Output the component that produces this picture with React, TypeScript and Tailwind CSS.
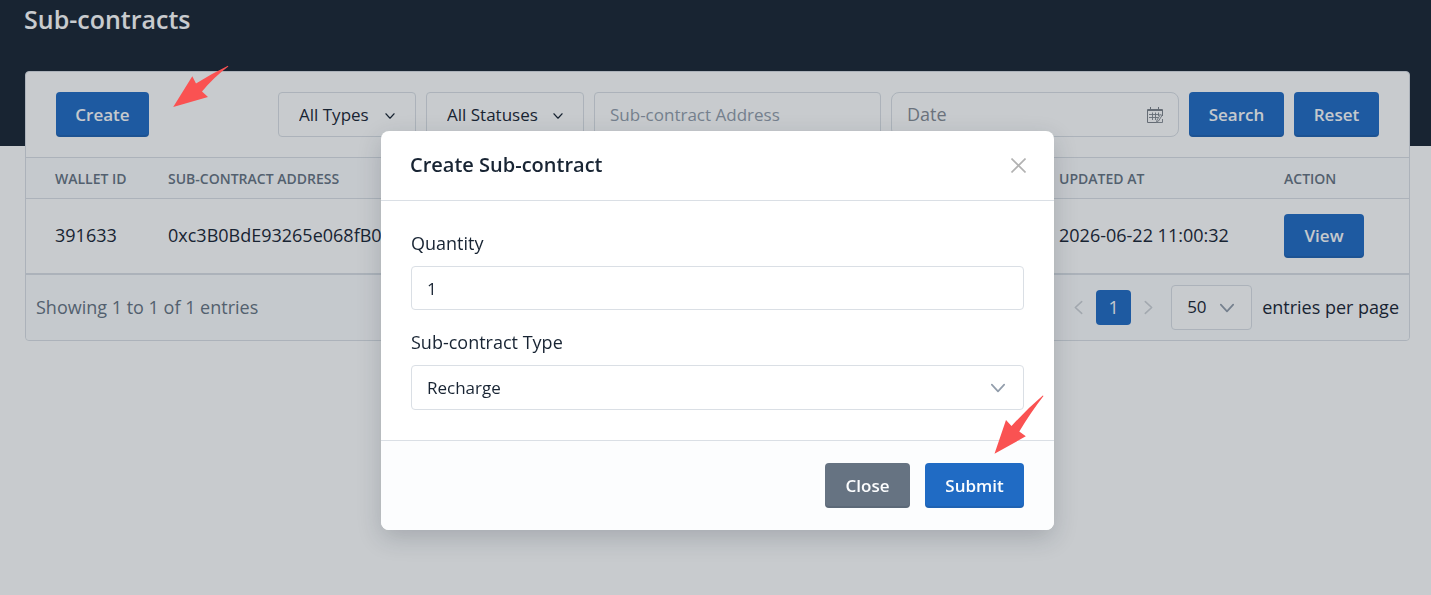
import React from "react";

const btn =
  "shrink-0 rounded bg-[#206bc4] text-[17px] font-semibold text-[#fcfdfe] shadow-[inset_0_-2px_0_rgba(24,36,51,0.12)]";

function Chevron({ className, size }: { className: string; size: number }) {
  return (
    <svg className={className} width={size} height={size} viewBox="0 0 16 16" fill="none" stroke="currentColor" aria-hidden="true">
      <path d="M2.5 5 L8 11 L13.5 5" strokeWidth="1.5" strokeLinecap="round" strokeLinejoin="round" />
    </svg>
  );
}

function FilterSelect({ label, value, width }: { label: string; value: string; width: string }) {
  return (
    <div className={"relative shrink-0 " + width}>
      <select
        aria-label={label}
        className="h-[45px] w-full appearance-none rounded border border-[#dadfe5] bg-white pr-8 pl-5 text-[17px] font-medium text-[#182433]"
      >
        <option>{value}</option>
      </select>
      <Chevron size={12} className="pointer-events-none absolute top-[18px] right-5 text-[#182433]" />
    </div>
  );
}

function CalendarIcon() {
  return (
    <svg width="16" height="16" viewBox="0 0 16 16" fill="none" stroke="#7d838b" aria-hidden="true">
      <path d="M9.5 15.5H0.5V2.5H15.5V9" />
      <path d="M0.5 3.5H15.5M3.5 0V4M11.5 0V4" />
      <path d="M2 7.5H12.5M2 10.5H11M5.5 5.5V13M8.5 5.5V13M11.5 5.5V9" strokeWidth="0.9" />
      <path d="M9.5 15.5L10 13L13.5 7.5L15 8.5L11.5 14L9.5 15.5H15.5V12" strokeWidth="0.9" />
    </svg>
  );
}

export default function App() {
  return (
    <div className="min-h-screen bg-white font-['Open_Sans','Noto_Sans',sans-serif] text-[#182433]">
      <header className="h-[146px] bg-[#182433] px-6">
        <h1 className="pt-1 text-[25px] leading-[30px] font-semibold text-white">Sub-contracts</h1>
      </header>

      <main className="-mt-[75px] pr-[21px] pl-[25px]">
        <section className="rounded border border-[#dadfe5] bg-white">
          <div className="flex gap-2.5 px-[30px] py-5">
            <button type="button" className={btn + " h-[45px] w-[93px]"}>Create</button>
            <div className="ml-auto flex gap-2.5">
              <FilterSelect label="Type" value="All Types" width="w-[138px]" />
              <FilterSelect label="Status" value="All Statuses" width="w-[158px]" />
              <input
                aria-label="Sub-contract Address"
                placeholder="Sub-contract Address"
                className="h-[45px] w-[287px] rounded border border-[#dadfe5] bg-white px-[15px] text-[17px] placeholder:text-[#929dab]"
              />
              <div className="flex h-[45px] w-[288px] items-center rounded-lg border border-[#dadfe5] bg-white px-[15px]">
                <input aria-label="Date" placeholder="Date" className="min-w-0 flex-1 bg-transparent text-[18px] placeholder:text-[#858b94]" />
                <CalendarIcon />
              </div>
              <button type="button" className={btn + " h-[45px] w-[95px]"}>Search</button>
              <button type="button" className={btn + " h-[45px] w-[85px]"}>Reset</button>
            </div>
          </div>

          <table className="w-full table-fixed border-t border-[#dadfe5] text-left">
            <colgroup>
              <col className="w-[131px]" />
              <col />
              <col className="w-[225px]" />
              <col className="w-[136px]" />
            </colgroup>
            <thead>
              <tr className="h-[41px] border-b border-[#dadfe5] bg-[#fcfdfe] text-[14px] text-[#667382]">
                <th className="pl-[29px] font-semibold">WALLET ID</th>
                <th className="pl-[11px] font-semibold">SUB-CONTRACT ADDRESS</th>
                <th className="pl-[11px] font-semibold">UPDATED AT</th>
                <th className="pl-[11px] font-semibold">ACTION</th>
              </tr>
            </thead>
            <tbody>
              <tr className="h-[75px] border-b-2 border-[#dadfe5] text-[18px]">
                <td className="pl-[29px]">391633</td>
                <td className="pl-[11px]">0xc3B0BdE93265e068fB0f</td>
                <td className="pl-[11px] whitespace-nowrap">2026-06-22 11:00:32</td>
                <td className="pl-[11px]">
                  <button type="button" className={btn + " h-11 w-20"}>View</button>
                </td>
              </tr>
            </tbody>
          </table>

          <div className="flex items-center rounded-b bg-[#fcfdfe] px-2.5 py-2.5 text-[18px]">
            <p className="text-[#667382]">Showing 1 to 1 of 1 entries</p>
            <nav aria-label="Pagination" className="ml-auto flex items-center">
              <button type="button" aria-label="Previous page" disabled className="flex w-[35px] justify-center text-[#cdd1d6]">
                <Chevron size={17} className="rotate-90" />
              </button>
              <button type="button" aria-current="page" className="size-[35px] rounded bg-[#206bc4] text-[#fcfdfe]">1</button>
              <button type="button" aria-label="Next page" disabled className="flex w-[35px] justify-center text-[#cdd1d6]">
                <Chevron size={17} className="-rotate-90" />
              </button>
            </nav>
            <label className="ml-[5px] flex items-center gap-2.5">
              <span className="relative">
                <select className="block h-[45px] w-[81px] appearance-none rounded border border-[#dadfe5] bg-white pl-[15px] text-[17px]">
                  <option>50</option>
                </select>
                <Chevron size={18} className="pointer-events-none absolute top-[14px] right-4 text-[#929dab]" />
              </span>
              <span>entries per page</span>
            </label>
          </div>
        </section>
      </main>

      <div className="fixed inset-0 flex items-start justify-center bg-[#182433]/24 pt-[131px] pl-1">
        <div
          role="dialog"
          aria-modal="true"
          aria-labelledby="dialog-title"
          className="relative w-full max-w-[673px] rounded-lg bg-white shadow-[0_8px_24px_rgba(24,36,51,0.2)]"
        >
          <div className="flex h-[70px] items-center justify-between border-b border-[#dadfe5] pr-7 pl-[29px]">
            <h2 id="dialog-title" className="pb-0.5 text-[20px] font-semibold">Create Sub-contract</h2>
            <button type="button" aria-label="Close dialog" className="text-[#b2b2b2]">
              <svg width="15" height="15" viewBox="0 0 15 15" fill="none" stroke="currentColor" strokeWidth="1.6">
                <path d="M0.5 0.5L14.5 14.5M14.5 0.5L0.5 14.5" />
              </svg>
            </button>
          </div>
          <div className="p-[30px]">
            <label htmlFor="quantity" className="mb-2.5 block text-[18px] leading-[25px]">Quantity</label>
            <input
              id="quantity"
              defaultValue="1"
              className="mb-5 block h-11 w-full rounded border border-[#dadfe5] px-[15px] text-[17px]"
            />
            <label htmlFor="contract-type" className="mb-2.5 block text-[18px] leading-[25px]">Sub-contract Type</label>
            <div className="relative">
              <select
                id="contract-type"
                className="block h-[45px] w-full appearance-none rounded border border-[#dadfe5] bg-white px-[15px] text-[17px]"
              >
                <option>Recharge</option>
              </select>
              <Chevron size={18} className="pointer-events-none absolute top-[14px] right-[17px] text-[#929dab]" />
            </div>
          </div>
          <div className="flex justify-end gap-[15px] rounded-b-lg border-t border-[#dadfe5] bg-[#fcfdfe] px-[30px] py-[22px]">
            <button type="button" className="h-[45px] w-[85px] rounded bg-[#667382] text-[17px] font-semibold text-[#fcfdfe] shadow-[inset_0_-2px_0_rgba(24,36,51,0.12)]">
              Close
            </button>
            <button type="button" className={btn + " h-[45px] w-[99px]"}>Submit</button>
          </div>
          <svg className="pointer-events-none absolute top-[264px] right-2.5" width="51" height="60" viewBox="993 395 51 60" fill="#fa5252" aria-hidden="true">
            <path d="M994.5 453.8L1006 420L1011.5 426Q1027 409 1042.8 395.5L1043.5 396Q1031 412 1019.3 431.5L1025.8 436.3Z" />
          </svg>
        </div>
        <svg className="pointer-events-none absolute top-[65px] left-[172px]" width="58" height="43" viewBox="172 65 58 43" fill="#fa5252" aria-hidden="true">
          <path d="M173.2 107L192.3 76.3L196 83.5Q211 74 228 65.8L228.3 66.5Q214 77 202 91.5L208 97Z" />
        </svg>
      </div>
    </div>
  );
}
